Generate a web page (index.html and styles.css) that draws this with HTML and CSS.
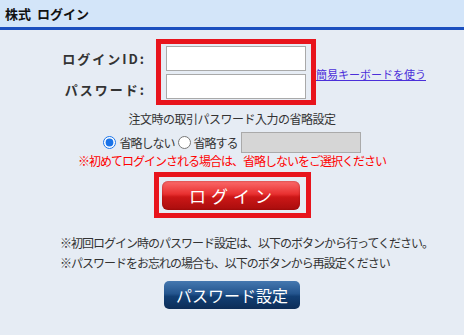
FILE: index.html
```html
<!DOCTYPE html>
<html lang="ja">
<head>
    <meta charset="UTF-8">
    <title>株式 ログイン</title>
    <link rel="stylesheet" href="styles.css">
</head>
<body>
    <header class="page-head">
        <h1>株式&nbsp; ログイン</h1>
    </header>

    <main class="login">
        <div class="login-row">
            <div class="labels">
                <label for="login-id">ログインID:</label>
                <label for="password">パスワード:</label>
            </div>
            <div class="hl-box fields">
                <input type="text" id="login-id">
                <input type="password" id="password">
            </div>
            <a class="kbd-link" href="#">簡易キーボードを使う</a>
        </div>

        <p class="skip-title">注文時の取引パスワード入力の省略設定</p>
        <div class="skip-row">
            <label><input type="radio" name="skip" checked>省略しない</label>
            <label><input type="radio" name="skip">省略する</label>
            <input type="text" class="skip-input" disabled>
        </div>
        <p class="warn">※初めてログインされる場合は、省略しないをご選択ください</p>

        <div class="hl-box login-wrap">
            <button class="btn-login">ログイン</button>
        </div>

        <div class="notes">
            <p>※初回ログイン時のパスワード設定は、以下のボタンから行ってください。</p>
            <p>※パスワードをお忘れの場合も、以下のボタンから再設定ください</p>
        </div>

        <button class="btn-pw">パスワード設定</button>
    </main>
</body>
</html>
```

FILE: styles.css
```css
body {
    margin: 0;
    font-family: "Noto Sans CJK JP", "Noto Sans", sans-serif;
    font-size: 12px;
    color: #333;
    background-color: #e6ecf4;
}

.page-head {
    height: 27px;
    background-color: #d3e5f9;
    border-bottom: 3px solid #1b4fbf;
}

.page-head h1 {
    margin: 0;
    padding-left: 5px;
    font-size: 13px;
    line-height: 27px;
    color: #111;
}

.login {
    display: flex;
    flex-direction: column;
    align-items: center;
}

.login-row {
    display: flex;
    align-self: flex-start;
    margin: 9px 0 0 44px;
}

.labels {
    width: 102px;
    margin-right: 10px;
    display: flex;
    flex-direction: column;
    justify-content: space-around;
    padding-top: 4px;
    text-align: right;
}

.labels label {
    font-size: 13px;
    font-weight: bold;
    letter-spacing: 2px;
    color: #333;
}

.hl-box {
    border: 5px solid #e8141c;
}

.fields {
    display: flex;
    flex-direction: column;
    gap: 3px;
    padding: 2px 5px 1px 5px;
}

.fields input {
    width: 140px;
    height: 25px;
    box-sizing: border-box;
    border: 1px solid #a9a9a9;
    background: #fff;
    margin: 0;
}

.kbd-link {
    align-self: center;
    margin-top: 4px;
    font-size: 11px;
    color: #4b2fd9;
}

.skip-title {
    margin: 6px 0 0;
    line-height: 16px;
    letter-spacing: -0.5px;
}

.skip-row {
    display: flex;
    align-items: center;
    margin-top: 5px;
    letter-spacing: -1px;
}

.skip-row label {
    display: flex;
    align-items: center;
    margin-right: 3px;
}

.skip-row input[type="radio"] {
    width: 13px;
    height: 13px;
    margin: 0 3px 0 0;
    accent-color: #1a73e8;
}

.skip-input {
    width: 120px;
    height: 21px;
    box-sizing: border-box;
    border: 1px solid #aaa;
    background: #d6d6d6;
}

.warn {
    margin: 0;
    color: #f00;
    line-height: 16px;
    letter-spacing: -1px;
}

.login-wrap {
    margin-top: 3px;
    padding: 4px 6px 3px 3px;
}

.btn-login {
    display: block;
    width: 138px;
    height: 29px;
    border: none;
    border-radius: 6px;
    background: linear-gradient(#fb6b6b, #e83030 45%, #cc1717 55%, #a90d0d);
    box-shadow: inset 0 0 2px rgba(120, 0, 0, 0.6);
    color: #fff;
    font-family: inherit;
    font-size: 17px;
    letter-spacing: 5px;
    text-indent: 5px;
    cursor: pointer;
}

.notes {
    align-self: flex-start;
    margin: 15px 0 0 60px;
    letter-spacing: -1px;
}

.notes p {
    margin: 0;
    line-height: 20px;
}

.btn-pw {
    margin-top: 8px;
    width: 136px;
    height: 28px;
    border: none;
    border-radius: 5px;
    background: linear-gradient(#4578b0, #24558e 45%, #123f74 55%, #0c2d57);
    color: #fff;
    font-family: inherit;
    font-size: 16px;
    cursor: pointer;
}
```
